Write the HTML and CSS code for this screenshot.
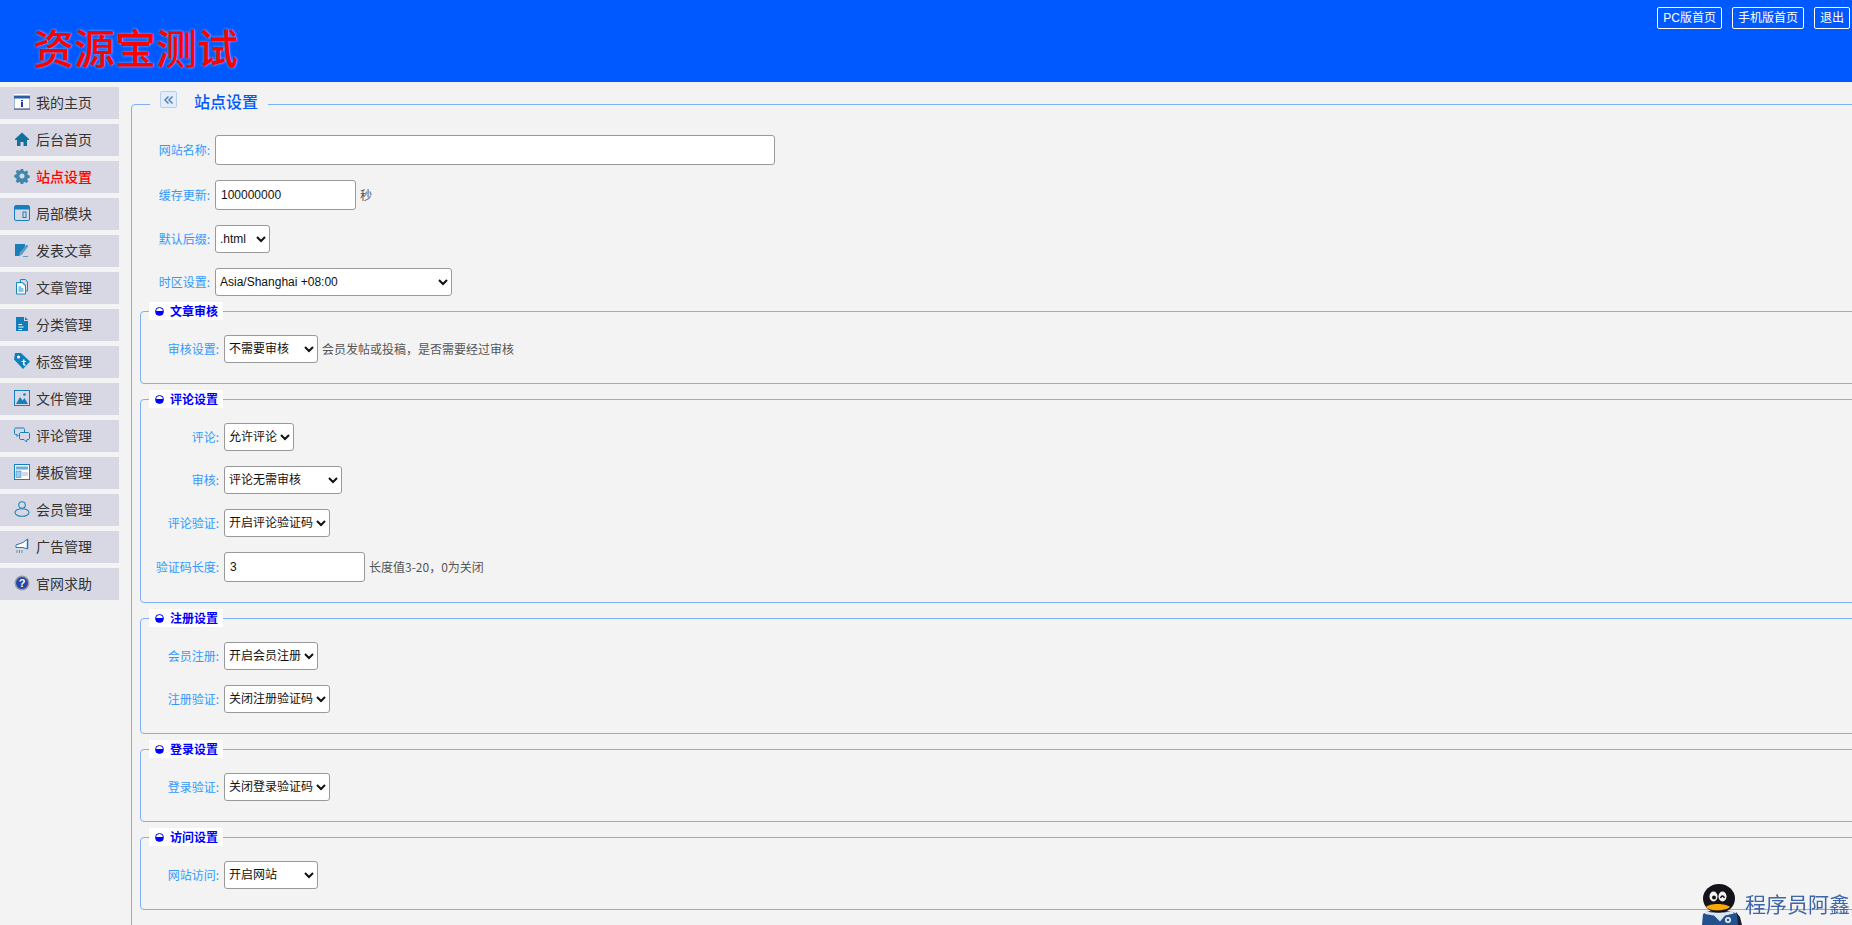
FILE: index.html
```html
<!DOCTYPE html>
<html lang="zh">
<head>
<meta charset="utf-8">
<title>站点设置</title>
<link rel="stylesheet" href="styles.css">
</head>
<body>
<header class="top">
  <h1 class="logo">资源宝测试</h1>
  <nav class="top-links">
    <a class="top-link">PC版首页</a>
    <a class="top-link">手机版首页</a>
    <a class="top-link">退出</a>
  </nav>
</header>
<div class="shell">
  <aside class="side">
    <a class="side-item"><svg class="ico" viewBox="0 0 16 16"><rect x="0" y="0" width="16" height="16" fill="#fff"/><rect x="0" y="2" width="16" height="13" fill="#fff" stroke="#4a6ca8"/><rect x="0" y="2" width="16" height="2.500" fill="#2a5fa8"/><rect x="0" y="14.500" width="16" height="1.500" fill="#7a8090"/><rect x="7" y="8" width="2" height="5" fill="#1a3f9a"/><rect x="7" y="6" width="2" height="1.300" fill="#1a3f9a"/></svg>我的主页</a>
    <a class="side-item"><svg class="ico" viewBox="0 0 16 16"><path d="M8 1.500 1 8v1h2v6h3.500v-4h3v4H13V9h2V8z" fill="#12719f"/></svg>后台首页</a>
    <a class="side-item on"><svg class="ico" viewBox="0 0 16 16"><path d="M6.800 1h2.400l.4 1.900 1.300.5 1.700-1 1.700 1.700-1 1.700.5 1.300 1.900.4v2.400l-1.900.4-.5 1.300 1 1.700-1.700 1.700-1.700-1-1.300.5-.4 1.900H6.800l-.4-1.900-1.300-.5-1.700 1-1.700-1.700 1-1.700-.5-1.300L.3 9.200V6.800l1.900-.4.5-1.300-1-1.700 1.700-1.700 1.700 1 1.300-.5zM8 5.500A2.500 2.500 0 1 0 8 10.500 2.500 2.500 0 0 0 8 5.500z" fill="#3f86ad" fill-rule="evenodd"/></svg>站点设置</a>
    <a class="side-item"><svg class="ico" viewBox="0 0 16 16"><rect x=".5" y=".5" width="15" height="15" rx="1.500" fill="#d8d8e4" stroke="#1580bd"/><rect x="1" y="1" width="14" height="3.500" fill="#1580bd"/><rect x="9" y="7" width="3" height="5.500" fill="none" stroke="#1580bd"/></svg>局部模块</a>
    <a class="side-item"><svg class="ico" viewBox="0 0 16 16"><path d="M1 2h10v3L6 11l-.5 3H1z" fill="#1a7fb8"/><path d="M12.500 2.500l2 1.500-6.500 8.500-2.500 1.500.5-2.800z M9 14h5v1H9z" fill="#5c9cc5"/></svg>发表文章</a>
    <a class="side-item"><svg class="ico" viewBox="0 0 16 16"><path d="M6.500.5h5l2 2.500v9h-2V6L8.500 3.500h-2z" fill="#d8d8e4" stroke="#0f8cc8"/><path d="M2.500 3.500H8l3.500 3.500v8h-9z" fill="#fff" stroke="#0f8cc8"/><path d="M4.500 8H7M4.500 10h5M4.500 12h5" stroke="#0f8cc8"/></svg>文章管理</a>
    <a class="side-item"><svg class="ico" viewBox="0 0 16 16"><path d="M2 1h8v4h4v10H2z" fill="#0e7fbc"/><path d="M11 1l3 3h-3z" fill="#0e7fbc"/><path d="M4.500 8H8v1H4.500zM4.500 10.500h5v1h-5zM4.500 13h3.500v1H4.500z" fill="#fff"/></svg>分类管理</a>
    <a class="side-item"><svg class="ico" viewBox="0 0 16 16"><path d="M1 0h6l9 8.500L9 16 0 6.500z" fill="#0e7fbc"/><circle cx="4.500" cy="4" r="1.500" fill="#fff"/><path d="M9 6.500v1.500H7.500v1H9v2.500c0 1 1 1.500 2.500 1v-1c-.7.200-1 0-1-.5V9H12V8h-1.500V6.500z" fill="#fff"/></svg>标签管理</a>
    <a class="side-item"><svg class="ico" viewBox="0 0 16 16"><rect x=".5" y=".5" width="15" height="15" fill="#d8d8e4" stroke="#1580bd"/><path d="M2 14l4-7 2.500 3.500L10.500 8l3.500 6z" fill="#1580bd"/><circle cx="10.500" cy="4.500" r="1.300" fill="#1580bd"/></svg>文件管理</a>
    <a class="side-item"><svg class="ico" viewBox="0 0 16 16"><path d="M1.500 1h7.500c1 0 1.500.5 1.500 1.500V6c0 1-.5 1.500-1.500 1.500H5L3 9.500v-2H1.500C.5 7.500.5 7 .5 6V2.500C.5 1.500 1 1 1.500 1z" fill="none" stroke="#1580bd"/><path d="M7 5.500h7c1 0 1.500.5 1.500 1.500v4c0 1-.5 1.500-1.500 1.500h-1l-.5 2.500-2.500-2.500H7c-1 0-1.500-.5-1.500-1.500V7c0-1 .5-1.500 1.500-1.500z" fill="#d8d8e4" stroke="#1580bd"/></svg>评论管理</a>
    <a class="side-item"><svg class="ico" viewBox="0 0 16 16"><rect x=".5" y=".5" width="15" height="15" fill="#fff" stroke="#1580bd"/><rect x="2" y="2.500" width="12" height="3" fill="#68aedb"/><rect x="2" y="7" width="5" height="6.500" fill="#9fcbe8" stroke="#1580bd" stroke-width=".5"/><rect x="8" y="8" width="6" height="4" fill="#d8d8e4"/></svg>模板管理</a>
    <a class="side-item"><svg class="ico" viewBox="0 0 16 16"><circle cx="8" cy="4" r="3.300" fill="none" stroke="#1e84ba" stroke-width="1.100"/><ellipse cx="8" cy="11.500" rx="7" ry="3.800" fill="none" stroke="#1e84ba" stroke-width="1.100"/></svg>会员管理</a>
    <a class="side-item"><svg class="ico" viewBox="0 0 16 16"><path d="M2 7l7-2.500L13.500 1v10L9 9.500 2 9.500z" fill="#fff" stroke="#2a74b0"/><path d="M13.500 1v10" stroke="#2a74b0" stroke-width="1.500"/><path d="M3 12v3M5.500 12v3M8 12v3" stroke="#5c8fb5"/></svg>广告管理</a>
    <a class="side-item"><svg class="ico" viewBox="0 0 16 16"><circle cx="8" cy="8" r="7.500" fill="#9a9aa6"/><circle cx="8" cy="8" r="6" fill="#2546a8"/><text x="8" y="12" class="help-mark">?</text></svg>官网求助</a>
  </aside>
  <main class="main">
    <fieldset class="panel">
      <legend class="panel-legend"><button class="collapse" type="button"><svg viewBox="0 0 10 10" class="collapse-ico"><path d="M4.500 1.500 1 5l3.500 3.500M8.500 1.500 5 5l3.500 3.500" fill="none" stroke="#4a78b5" stroke-width="1.400"/></svg></button><span class="panel-title">站点设置</span></legend>
      <div class="row"><label class="lbl">网站名称:</label><input class="txt w-name" type="text"></div>
      <div class="row"><label class="lbl">缓存更新:</label><input class="txt w-cache" type="text" value="100000000"><span class="hint">秒</span></div>
      <div class="row"><label class="lbl">默认后缀:</label><select class="sel w-ext"><option>.html</option></select></div>
      <div class="row tight"><label class="lbl">时区设置:</label><select class="sel w-tz"><option>Asia/Shanghai +08:00</option></select></div>

      <fieldset class="group">
        <legend class="group-legend"><i class="dot"></i>文章审核</legend>
        <div class="row in"><label class="lbl">审核设置:</label><select class="sel w-94"><option>不需要审核</option></select><span class="hint">会员发帖或投稿，是否需要经过审核</span></div>
      </fieldset>

      <fieldset class="group">
        <legend class="group-legend"><i class="dot"></i>评论设置</legend>
        <div class="row in"><label class="lbl">评论:</label><select class="sel w-70"><option>允许评论</option></select></div>
        <div class="row in"><label class="lbl">审核:</label><select class="sel w-118"><option>评论无需审核</option></select></div>
        <div class="row in"><label class="lbl">评论验证:</label><select class="sel w-106"><option>开启评论验证码</option></select></div>
        <div class="row in"><label class="lbl">验证码长度:</label><input class="txt w-len" type="text" value="3"><span class="hint">长度值3-20，0为关闭</span></div>
      </fieldset>

      <fieldset class="group">
        <legend class="group-legend"><i class="dot"></i>注册设置</legend>
        <div class="row in"><label class="lbl">会员注册:</label><select class="sel w-94"><option>开启会员注册</option></select></div>
        <div class="row in"><label class="lbl">注册验证:</label><select class="sel w-106"><option>关闭注册验证码</option></select></div>
      </fieldset>

      <fieldset class="group">
        <legend class="group-legend"><i class="dot"></i>登录设置</legend>
        <div class="row in"><label class="lbl">登录验证:</label><select class="sel w-106"><option>关闭登录验证码</option></select></div>
      </fieldset>

      <fieldset class="group">
        <legend class="group-legend"><i class="dot"></i>访问设置</legend>
        <div class="row in"><label class="lbl">网站访问:</label><select class="sel w-94"><option>开启网站</option></select></div>
      </fieldset>
    </fieldset>
  </main>
</div>
<div class="mark">
  <svg class="penguin" viewBox="0 0 40 41">
    <path d="M34 28l4 5 2 8h-8z" fill="#16202c"/>
    <path d="M0 41l1-11 6-3h22l6 3 1 11z" fill="#23508f"/>
    <ellipse cx="17" cy="14.500" rx="16" ry="14.500" fill="#131319"/>
    <ellipse cx="11.500" cy="12.500" rx="4" ry="5" fill="#f4f4f4"/>
    <ellipse cx="20.500" cy="12.500" rx="4" ry="5" fill="#f4f4f4"/>
    <circle cx="12" cy="13.500" r="2" fill="#111"/>
    <path d="M18.500 14q2-4 4 0" fill="none" stroke="#111" stroke-width="1.500"/>
    <path d="M4 23c3-4 20-4 24 0-4 4-20 5-24 0z" fill="#f8a908"/>
    <path d="M3 26.500c4 3 22 3 27 0l2 3-9 2-5 6-6-6-9-1.500z" fill="#dce6f0"/>
    <circle cx="26" cy="36" r="3" fill="#e8eef5"/><circle cx="26" cy="36" r="1.300" fill="#23508f"/>
  </svg>
  <span class="mark-text">程序员阿鑫</span>
</div>
</body>
</html>
```

FILE: styles.css
```css
html, body {
  margin: 0;
  padding: 0;
  height: 925px;
  overflow: hidden;
  background: #f3f3f3;
  font-family: "Liberation Sans", "Noto Sans CJK SC", sans-serif;
  font-size: 12px;
}

.top {
  height: 82px;
  background: #0058ff;
  display: flex;
  justify-content: space-between;
  align-items: flex-start;
}

.logo {
  margin: 23px 0 0 33px;
  font: 500 41px/46px "Noto Sans CJK SC", sans-serif;
  color: #ff0000;
  text-shadow: 0 0 3px #8fb4ff;
}

.top-links {
  display: flex;
  gap: 10px;
  margin: 7px 2px 0 0;
}

.top-link {
  height: 20px;
  line-height: 20px;
  padding: 0 5px;
  border: 1px solid #fff;
  border-radius: 2px;
  color: #fff;
  font-size: 12px;
}

.shell {
  display: flex;
}

.side {
  width: 119px;
  flex: none;
  padding-top: 5px;
  display: flex;
  flex-direction: column;
  gap: 5px;
}

.side-item {
  height: 32px;
  box-sizing: border-box;
  padding-bottom: 2px;
  background: #d8d8e4;
  display: flex;
  align-items: center;
  color: #333;
  font: 14px/30px "Noto Sans CJK SC", sans-serif;
}

.side-item.on {
  color: #ff0000;
  font-weight: 500;
}

.ico {
  width: 16px;
  height: 16px;
  margin: 0 6px 0 14px;
  flex: none;
}

.help-mark {
  font: 700 11px "Liberation Sans", sans-serif;
  fill: #fff;
  text-anchor: middle;
}

.main {
  margin-left: 12px;
  width: 1900px;
  flex: none;
}

fieldset {
  margin: 0;
  min-width: 0;
}

.panel {
  border: 1px solid #7fb0f5;
  border-radius: 4px;
  padding: 18px 0 0 8px;
  margin-top: 9px;
  height: 1000px;
  box-sizing: border-box;
}

.panel-legend {
  margin-left: 10px;
  padding: 0 0 0 10px;
  display: flex;
  align-items: flex-start;
  height: 26px;
}

.collapse {
  width: 17px;
  height: 17px;
  margin-top: 0;
  padding: 0;
  border: 1px solid #b9cfee;
  border-radius: 2px;
  background: #e2ecfa;
  display: flex;
  align-items: center;
  justify-content: center;
}

.collapse-ico {
  width: 10px;
  height: 10px;
}

.panel-title {
  margin: 1px 10px 0 17px;
  color: #0058ff;
  font: 500 16px/18px "Noto Sans CJK SC", sans-serif;
}

.row {
  display: flex;
  align-items: center;
  margin-bottom: 15px;
  min-height: 28px;
}

.row.tight {
  margin-bottom: 6px;
}

.lbl {
  width: 70px;
  flex: none;
  margin-right: 5px;
  padding-bottom: 1px;
  text-align: right;
  color: #3399ff;
  font: 12px/16px "Noto Sans CJK SC", sans-serif;
}

.row.in .lbl {
  width: 78px;
}

.hint {
  margin-left: 4px;
  padding-bottom: 1px;
  color: #555;
  font: 12px/16px "Noto Sans CJK SC", sans-serif;
}

.txt, .sel {
  box-sizing: border-box;
  border: 1px solid #999;
  border-radius: 3px;
  background: #fff;
  color: #111;
  margin: 0;
  font: 12px "Liberation Sans", "Noto Sans CJK SC", sans-serif;
}

.txt {
  height: 30px;
  padding: 0 5px;
}

.sel {
  height: 27.500px;
  padding: 0;
}

.w-name { width: 560px; }
.w-cache { width: 141px; }
.w-ext { width: 55px; }
.w-tz { width: 237px; }
.w-len { width: 141px; }
.w-94 { width: 94px; }
.w-70 { width: 70px; }
.w-118 { width: 118px; }
.w-106 { width: 106px; }

.group {
  border: 1px solid #7fb0f5;
  border-radius: 4px;
  padding: 15px 0 5px 0;
  margin: 0 0 6px 0;
}

.group-legend {
  margin-left: 8px;
  padding: 0 0 0 6px;
  box-sizing: border-box;
  height: 18px;
  width: 74px;
  background: #fff;
  color: #0000ff;
  display: flex;
  align-items: center;
  font: 700 12px/18px "Noto Sans CJK SC", sans-serif;
}

.dot {
  width: 9px;
  height: 9px;
  flex: none;
  margin: 0 6px 0 0;
  border-radius: 50%;
  border: 1px solid #0000ff;
  box-sizing: border-box;
  background: linear-gradient(#fff 40%, #0000ff 40%);
}

.mark {
  position: fixed;
  right: 2px;
  bottom: 0;
  display: flex;
  align-items: flex-start;
}

.penguin {
  width: 40px;
  height: 41px;
  margin-right: 3px;
  display: block;
}

.mark-text {
  color: #3f66a8;
  font: 21px/24px "Noto Sans CJK SC", sans-serif;
  margin-top: 7px;
}
```
